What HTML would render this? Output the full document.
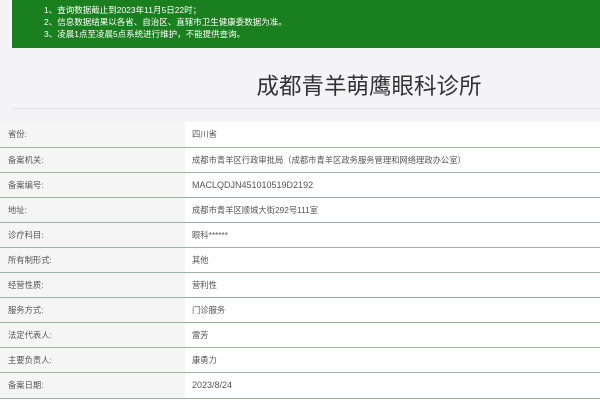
<!DOCTYPE html>
<html><head><meta charset="utf-8"><style>
*{margin:0;padding:0;box-sizing:border-box}
body{width:600px;height:400px;overflow:hidden;background:#fff;font-family:"Liberation Sans","Noto Sans CJK SC",sans-serif;color:#555;position:relative}
.top{position:absolute;left:0;top:0;width:600px;height:122px;background:#f4f4f6}
.green{position:absolute;left:12px;top:0;width:588px;height:48px;background:#1a7f1e;color:#fff;font-size:8.5px;line-height:12px;padding:4px 0 0 32px}
.title{position:absolute;left:0;width:600px;top:72px;text-align:center;padding-left:138px;font-size:22.5px;color:#333;line-height:30px}
.hl{position:absolute;left:12px;right:0;top:108px;height:1px;background:#e4e4e6}
table{position:absolute;left:0;top:122px;width:600px;border-collapse:collapse}
td{height:25.1px;font-size:8.3px;border-bottom:1.5px solid #9cb3a6;padding:0;vertical-align:middle}
td.l{width:185px;background:#f5f5f5;padding-left:8px}
td.v{padding-left:7px}
</style></head><body>
<div class="top"></div>
<div class="green">1、查询数据截止到2023年11月5日22时；<br>2、信息数据结果以各省、自治区、直辖市卫生健康委数据为准。<br>3、凌晨1点至凌晨5点系统进行维护，不能提供查询。</div>
<div class="title">成都青羊萌鹰眼科诊所</div>
<div class="hl"></div>
<table>
<tr><td class="l">省份:</td><td class="v">四川省</td></tr>
<tr><td class="l">备案机关:</td><td class="v">成都市青羊区行政审批局（成都市青羊区政务服务管理和网络理政办公室）</td></tr>
<tr><td class="l">备案编号:</td><td class="v" style="font-size:9px">MACLQDJN451010519D2192</td></tr>
<tr><td class="l">地址:</td><td class="v">成都市青羊区顺城大街292号111室</td></tr>
<tr><td class="l">诊疗科目:</td><td class="v">眼科******</td></tr>
<tr><td class="l">所有制形式:</td><td class="v">其他</td></tr>
<tr><td class="l">经营性质:</td><td class="v">营利性</td></tr>
<tr><td class="l">服务方式:</td><td class="v">门诊服务</td></tr>
<tr><td class="l">法定代表人:</td><td class="v">雷芳</td></tr>
<tr><td class="l">主要负责人:</td><td class="v">康勇力</td></tr>
<tr><td class="l">备案日期:</td><td class="v" style="font-size:9px">2023/8/24</td></tr>
</table>
</body></html>
